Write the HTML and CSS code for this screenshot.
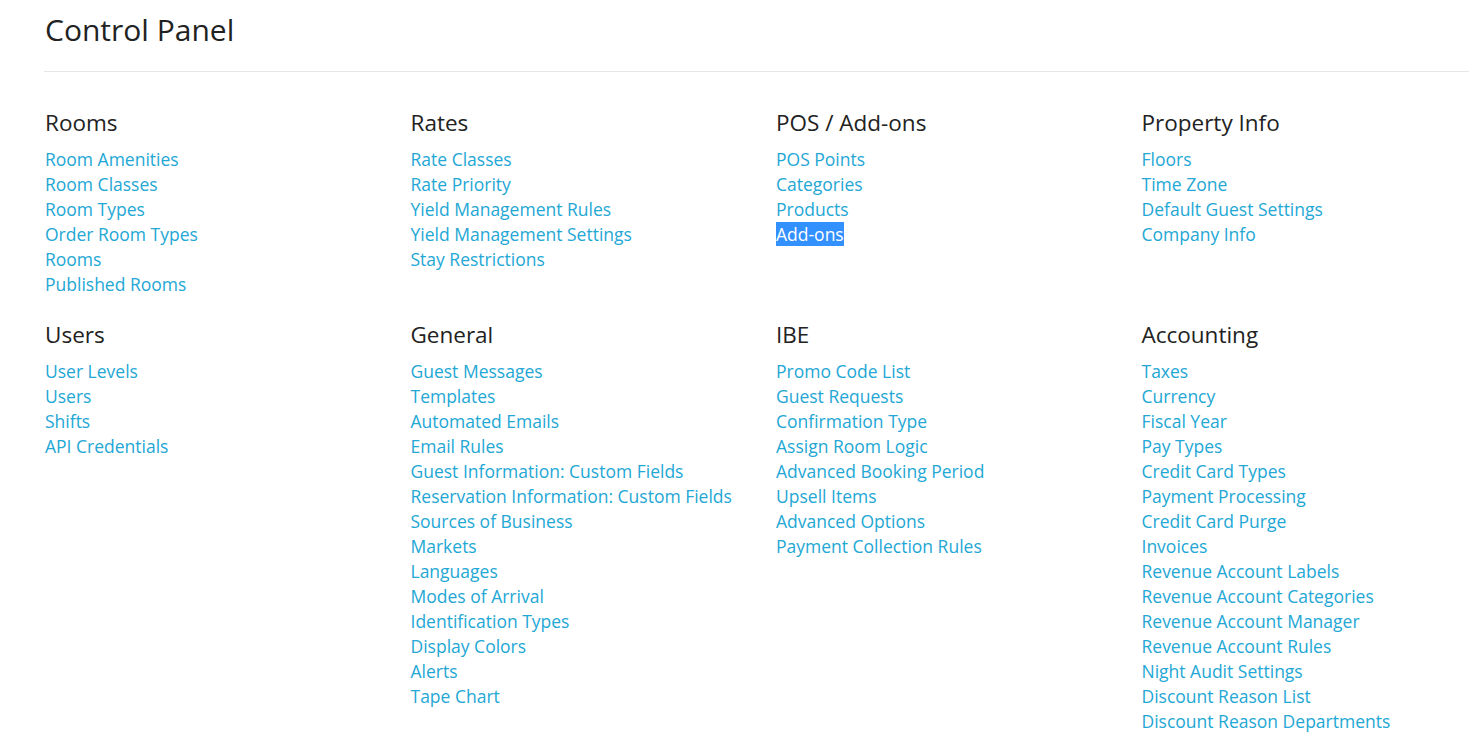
FILE: index.html
```html
<!DOCTYPE html>
<html>
<head>
<meta charset="utf-8">
<link rel="stylesheet" href="styles.css">
</head>
<body>
<div class="page">
  <h1 class="title">Control Panel</h1>
  <div class="grid">
    <section class="group">
      <h2>Rooms</h2>
      <ul>
        <li><a href="#">Room Amenities</a></li>
        <li><a href="#">Room Classes</a></li>
        <li><a href="#">Room Types</a></li>
        <li><a href="#">Order Room Types</a></li>
        <li><a href="#">Rooms</a></li>
        <li><a href="#">Published Rooms</a></li>
      </ul>
    </section>
    <section class="group">
      <h2>Rates</h2>
      <ul>
        <li><a href="#">Rate Classes</a></li>
        <li><a href="#">Rate Priority</a></li>
        <li><a href="#">Yield Management Rules</a></li>
        <li><a href="#">Yield Management Settings</a></li>
        <li><a href="#">Stay Restrictions</a></li>
      </ul>
    </section>
    <section class="group">
      <h2>POS / Add-ons</h2>
      <ul>
        <li><a href="#">POS Points</a></li>
        <li><a href="#">Categories</a></li>
        <li><a href="#">Products</a></li>
        <li><a href="#" class="selected">Add-ons</a></li>
      </ul>
    </section>
    <section class="group">
      <h2>Property Info</h2>
      <ul>
        <li><a href="#">Floors</a></li>
        <li><a href="#">Time Zone</a></li>
        <li><a href="#">Default Guest Settings</a></li>
        <li><a href="#">Company Info</a></li>
      </ul>
    </section>
    <section class="group">
      <h2>Users</h2>
      <ul>
        <li><a href="#">User Levels</a></li>
        <li><a href="#">Users</a></li>
        <li><a href="#">Shifts</a></li>
        <li><a href="#">API Credentials</a></li>
      </ul>
    </section>
    <section class="group">
      <h2>General</h2>
      <ul>
        <li><a href="#">Guest Messages</a></li>
        <li><a href="#">Templates</a></li>
        <li><a href="#">Automated Emails</a></li>
        <li><a href="#">Email Rules</a></li>
        <li><a href="#">Guest Information: Custom Fields</a></li>
        <li><a href="#">Reservation Information: Custom Fields</a></li>
        <li><a href="#">Sources of Business</a></li>
        <li><a href="#">Markets</a></li>
        <li><a href="#">Languages</a></li>
        <li><a href="#">Modes of Arrival</a></li>
        <li><a href="#">Identification Types</a></li>
        <li><a href="#">Display Colors</a></li>
        <li><a href="#">Alerts</a></li>
        <li><a href="#">Tape Chart</a></li>
      </ul>
    </section>
    <section class="group">
      <h2>IBE</h2>
      <ul>
        <li><a href="#">Promo Code List</a></li>
        <li><a href="#">Guest Requests</a></li>
        <li><a href="#">Confirmation Type</a></li>
        <li><a href="#">Assign Room Logic</a></li>
        <li><a href="#">Advanced Booking Period</a></li>
        <li><a href="#">Upsell Items</a></li>
        <li><a href="#">Advanced Options</a></li>
        <li><a href="#">Payment Collection Rules</a></li>
      </ul>
    </section>
    <section class="group">
      <h2>Accounting</h2>
      <ul>
        <li><a href="#">Taxes</a></li>
        <li><a href="#">Currency</a></li>
        <li><a href="#">Fiscal Year</a></li>
        <li><a href="#">Pay Types</a></li>
        <li><a href="#">Credit Card Types</a></li>
        <li><a href="#">Payment Processing</a></li>
        <li><a href="#">Credit Card Purge</a></li>
        <li><a href="#">Invoices</a></li>
        <li><a href="#">Revenue Account Labels</a></li>
        <li><a href="#">Revenue Account Categories</a></li>
        <li><a href="#">Revenue Account Manager</a></li>
        <li><a href="#">Revenue Account Rules</a></li>
        <li><a href="#">Night Audit Settings</a></li>
        <li><a href="#">Discount Reason List</a></li>
        <li><a href="#">Discount Reason Departments</a></li>
      </ul>
    </section>
  </div>
</div>
</body>
</html>
```
FILE: styles.css
```css
html, body {
  margin: 0;
  padding: 0;
  background: #ffffff;
  overflow: hidden;
}
body {
  font-family: "Open Sans", "Noto Sans", sans-serif;
  color: #222222;
}
.page {
  padding: 0 4px 0 44px;
}
.title {
  margin: 0;
  padding: 9px 0 21px 1px;
  font-size: 30px;
  font-weight: 400;
  line-height: 41px;
  border-bottom: 1px solid #e6e6e6;
}
.grid {
  display: grid;
  grid-template-columns: repeat(4, 365.5px);
  padding-top: 36px;
  padding-left: 1px;
  row-gap: 23px;
}
.group h2 {
  margin: 0 0 9px 0;
  font-size: 22.5px;
  font-weight: 400;
  line-height: 30px;
  color: #222222;
}
.group ul {
  list-style: none;
  margin: 0;
  padding: 0;
}
.group li {
  font-size: 17.5px;
  line-height: 25px;
}
.group a {
  color: #23a7d5;
  text-decoration: none;
}
.group a.selected {
  background: #3390ff;
  color: #ffffff;
}
```
